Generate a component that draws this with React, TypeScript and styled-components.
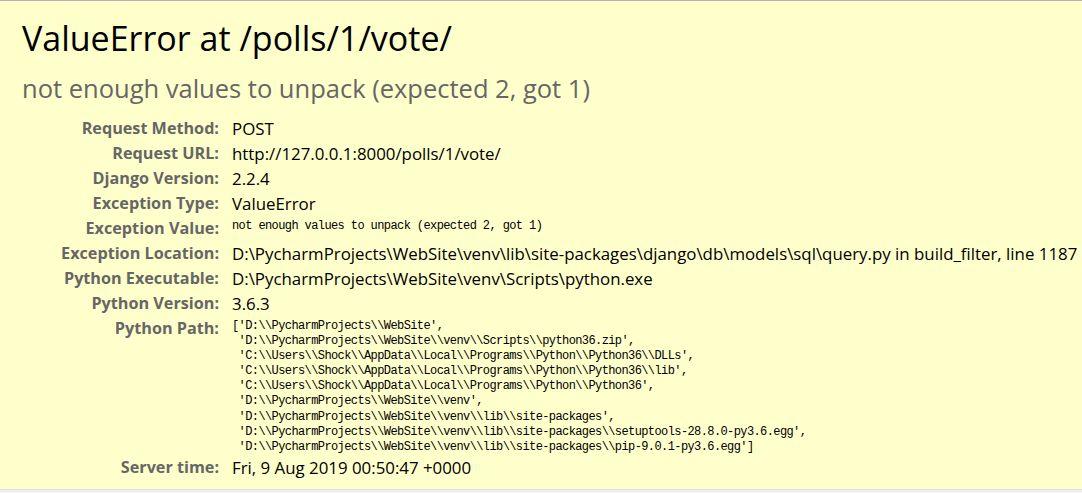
import React from 'react';
import styled, { createGlobalStyle } from 'styled-components';

const GlobalStyle = createGlobalStyle`
  html, body {
    margin: 0;
    padding: 0;
    background: #f0f0f0;
    overflow: hidden;
  }
  body {
    font-family: "Open Sans", "Liberation Sans", sans-serif;
    color: #000;
  }
`;

const meta: { label: string; value: string; mono?: boolean }[] = [
  { label: 'Request Method:', value: 'POST' },
  { label: 'Request URL:', value: 'http://127.0.0.1:8000/polls/1/vote/' },
  { label: 'Django Version:', value: '2.2.4' },
  { label: 'Exception Type:', value: 'ValueError' },
  { label: 'Exception Value:', value: 'not enough values to unpack (expected 2, got 1)', mono: true },
  {
    label: 'Exception Location:',
    value: 'D:\\PycharmProjects\\WebSite\\venv\\lib\\site-packages\\django\\db\\models\\sql\\query.py in build_filter, line 1187'
  },
  { label: 'Python Executable:', value: 'D:\\PycharmProjects\\WebSite\\venv\\Scripts\\python.exe' },
  { label: 'Python Version:', value: '3.6.3' },
  {
    label: 'Python Path:',
    mono: true,
    value: [
      "['D:\\\\PycharmProjects\\\\WebSite',",
      " 'D:\\\\PycharmProjects\\\\WebSite\\\\venv\\\\Scripts\\\\python36.zip',",
      " 'C:\\\\Users\\\\Shock\\\\AppData\\\\Local\\\\Programs\\\\Python\\\\Python36\\\\DLLs',",
      " 'C:\\\\Users\\\\Shock\\\\AppData\\\\Local\\\\Programs\\\\Python\\\\Python36\\\\lib',",
      " 'C:\\\\Users\\\\Shock\\\\AppData\\\\Local\\\\Programs\\\\Python\\\\Python36',",
      " 'D:\\\\PycharmProjects\\\\WebSite\\\\venv',",
      " 'D:\\\\PycharmProjects\\\\WebSite\\\\venv\\\\lib\\\\site-packages',",
      " 'D:\\\\PycharmProjects\\\\WebSite\\\\venv\\\\lib\\\\site-packages\\\\setuptools-28.8.0-py3.6.egg',",
      " 'D:\\\\PycharmProjects\\\\WebSite\\\\venv\\\\lib\\\\site-packages\\\\pip-9.0.1-py3.6.egg']"
    ].join('\n')
  },
  { label: 'Server time:', value: 'Fri, 9 Aug 2019 00:50:47 +0000' }
];

const App: React.FC = () => (
  <>
    <GlobalStyle />
    <Summary>
      <Title>ValueError at /polls/1/vote/</Title>
      <Subtitle>not enough values to unpack (expected 2, got 1)</Subtitle>
      <MetaTable>
        <tbody>
          {meta.map(row => (
            <tr key={row.label}>
              <th>{row.label}</th>
              <td>{row.mono ? <Pre>{row.value}</Pre> : row.value}</td>
            </tr>
          ))}
        </tbody>
      </MetaTable>
    </Summary>
  </>
);

const Summary = styled.div`
  background: #ffc;
  border-top: 1px solid #b4b4b4;
  border-bottom: 1px solid #ddd;
  height: 490px;
  box-sizing: border-box;
  padding: 12px 0 0 22px;
  overflow: hidden;
`;

const Title = styled.h1`
  margin: 0;
  font-size: 34px;
  font-weight: 400;
  line-height: 50px;
  color: #000;
`;

const Subtitle = styled.h2`
  margin: 0;
  font-size: 25.5px;
  font-weight: 400;
  line-height: 50px;
  color: #666;
`;

const MetaTable = styled.table`
  border-collapse: collapse;
  margin-top: 3px;
  width: max-content;

  th, td {
    padding: 0;
    vertical-align: top;
    line-height: 25px;
  }

  th {
    width: 197px;
    min-width: 197px;
    text-align: right;
    color: #666;
    font-size: 16.2px;
    font-weight: 700;
    padding-right: 13px;
    white-space: nowrap;
  }

  td {
    color: #000;
    font-size: 16.85px;
    white-space: nowrap;
  }
`;

const Pre = styled.pre`
  margin: 3px 0 0;
  font-family: "Liberation Mono", monospace;
  font-size: 12px;
  letter-spacing: -0.6px;
  line-height: 15.1px;
  color: #000;
`;

export default App;
